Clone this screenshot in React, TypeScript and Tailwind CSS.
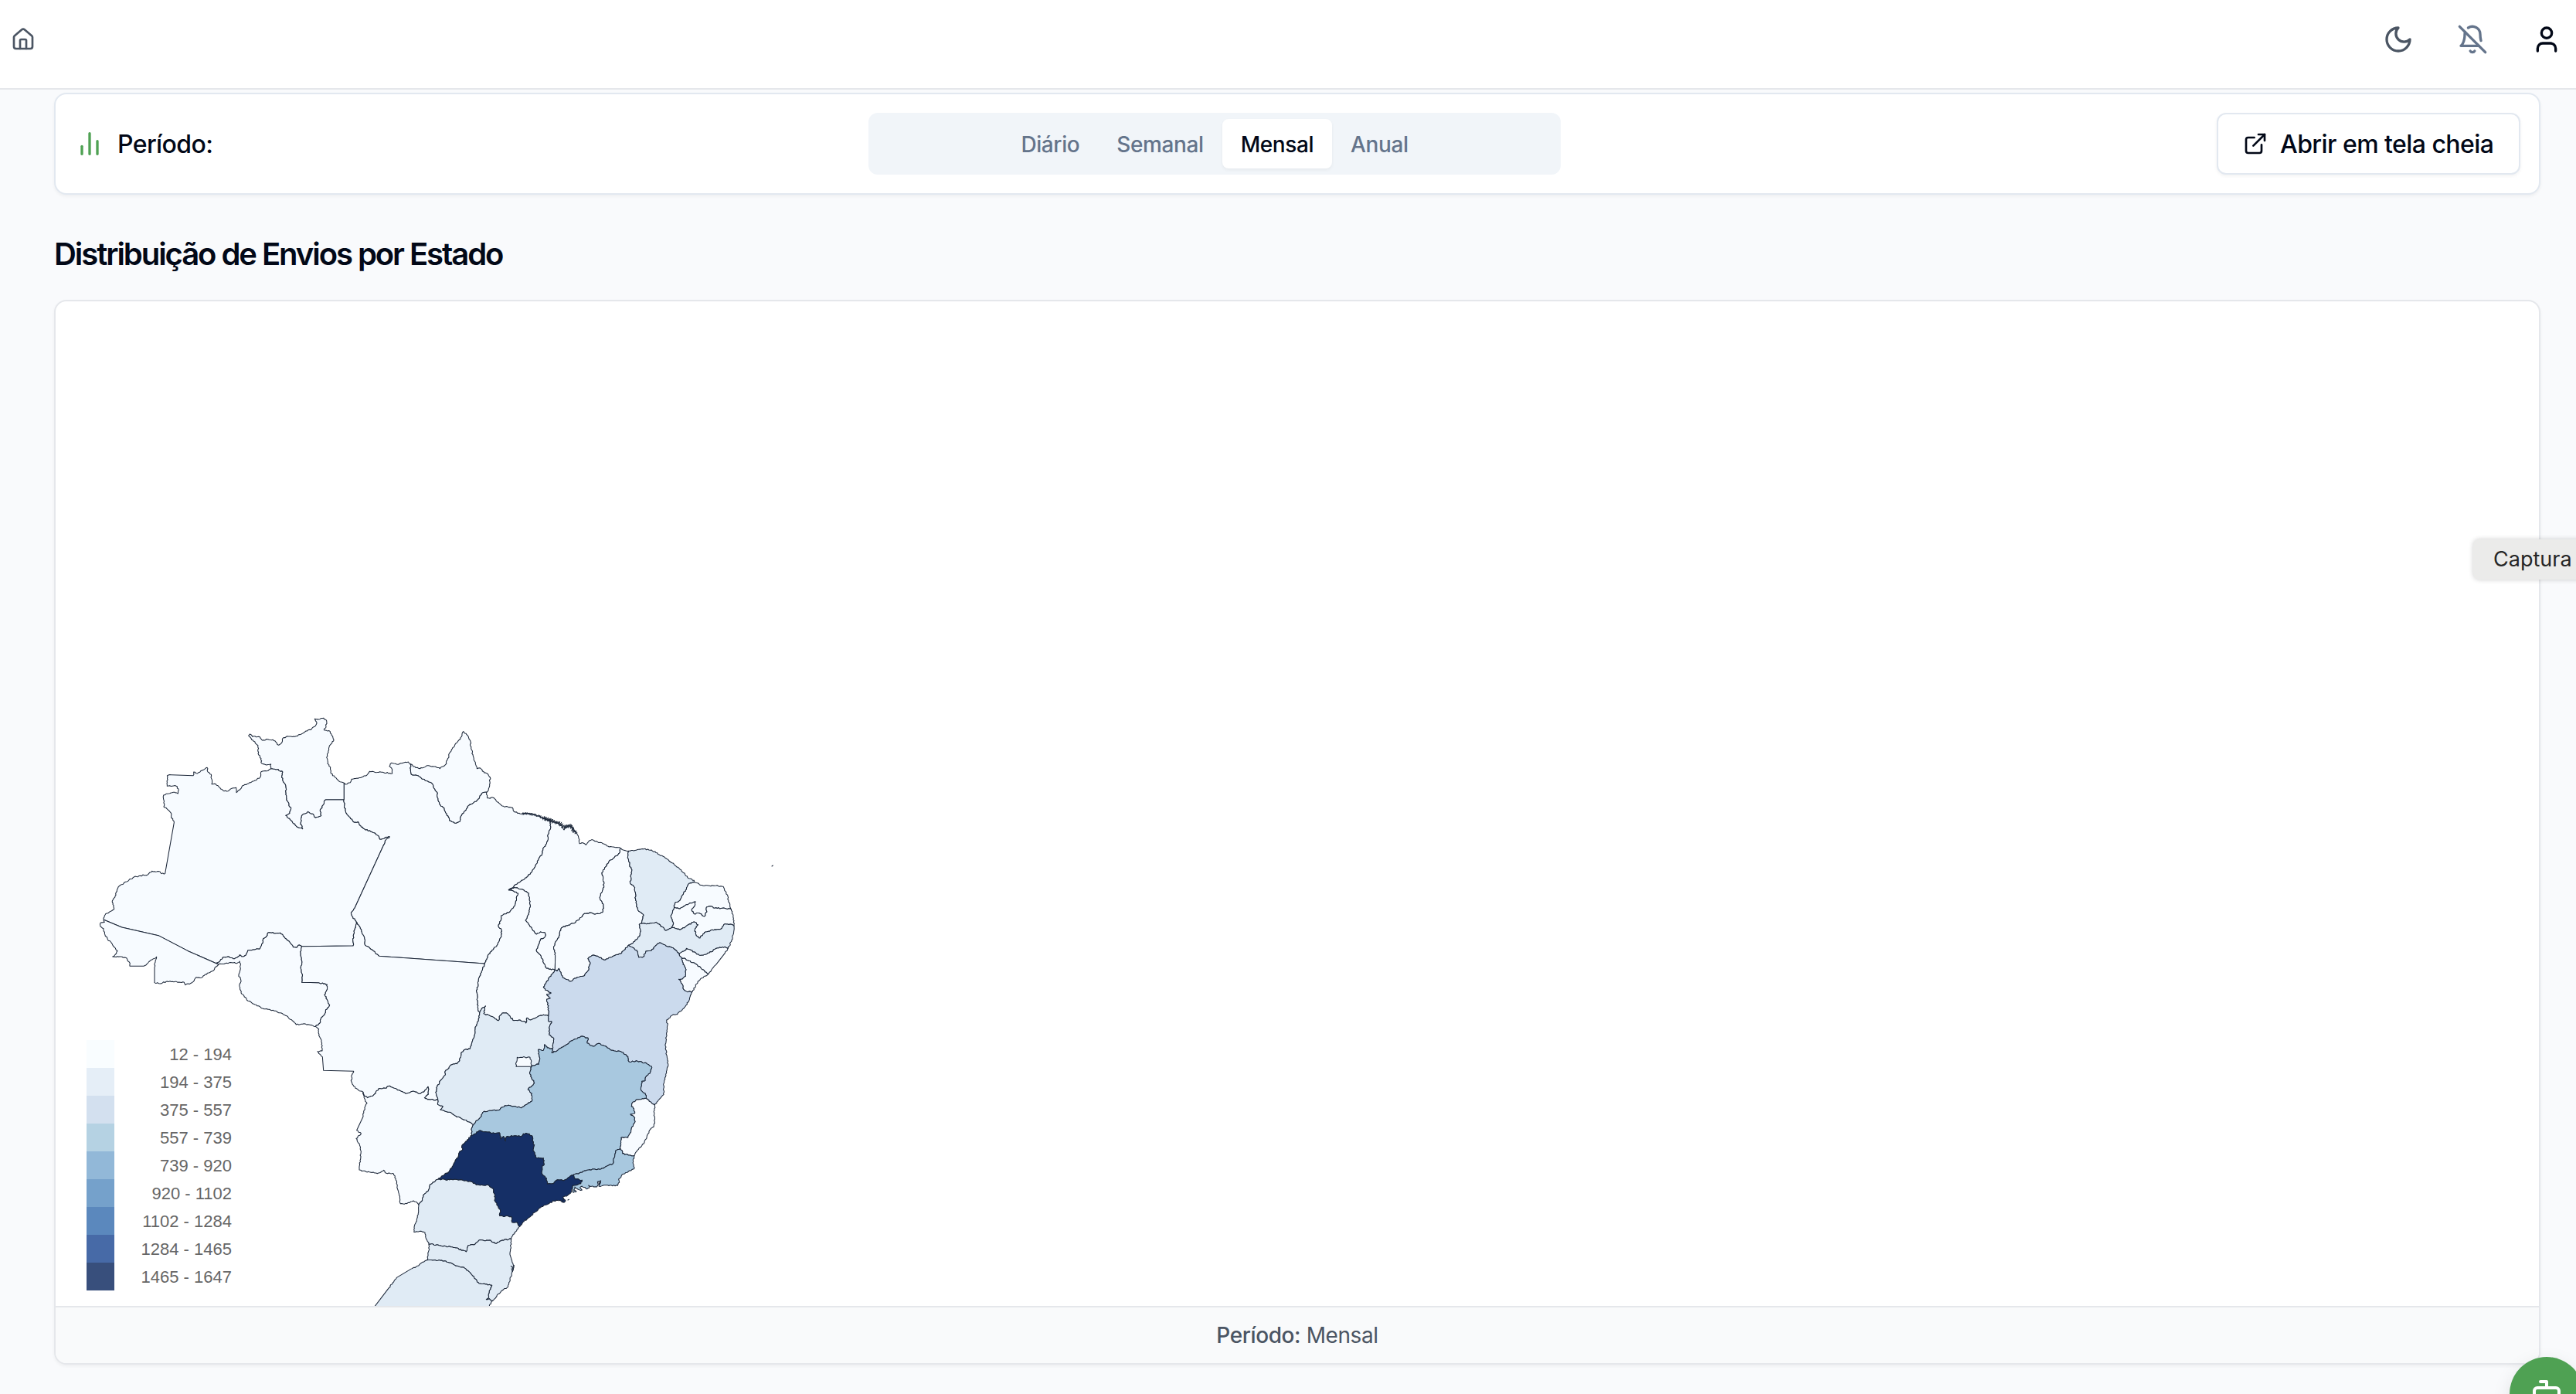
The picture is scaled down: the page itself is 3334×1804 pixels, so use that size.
import React from "react";

type Pt = [number, number];

/* Sheet origins: every border is digitised on one of five map sheets. */
const SHEETS: Record<string, Pt> = {
  A: [330, 2700],
  B: [1290, 2700],
  C: [1950, 3120],
  D: [1140, 3600],
  E: [1620, 3840],
};

const RAW: Record<string, string> = {
  amW: "A 73,871 76,855 85,846 100,838 113,830 111,815 106,803 110,790 120,775 124,755 130,742 150,730 170,718 190,705 215,700 245,695 260,682 288,683 298,692 311,691 346,493 335,470 333,455 318,440 306,432 306,386 325,381 343,376 361,381 362,362 354,352 319,352 319,312 335,308 420,311 422,297 437,303 449,293 460,289 474,280 478,298 490,307 492,344 508,344 524,358 540,371 556,371 572,360 587,358 588,377 600,367 612,350 635,342 660,330 680,318 684,296 705,293 722,284",
  rrAm: "A 722,284 745,287 768,297 764,318 776,342 782,365 780,385 786,410 800,440 795,458 780,466 800,485 820,507 845,518 837,495 841,467 865,451 885,460 895,474 917,466 913,450 920,430 935,404 1006,404",
  rrN: "A 722,284 722,267 705,270 685,263 684,245 672,226 672,195 655,178 635,156 640,150 650,160 675,160 688,174 710,170 730,172 745,185 752,193 765,182 768,166 785,158 815,160 840,150 858,138 880,130 895,118 900,108 892,91 912,92 927,88 938,98 936,120 928,134 952,140 958,155 966,172 948,200 945,222 938,240 942,265 953,278 955,303 975,320 990,335 1006,340",
  rrPa: "A 1006,340 1006,404",
  amPa: "A 1006,404 1007,430 1012,450 1025,470 1045,492 1060,490 1066,503 1085,518 1115,530 1140,545 1145,558 1165,552 1183,548 1165,565 1160,580 1047,826 1033,845 1040,860 1054,880",
  amMt: "A 1054,880 1048,905 1042,935 1041,972 842,974",
  amRo: "A 842,974 832,969 820,979 808,977 800,965 785,950 770,935 758,922 710,922 705,935 692,945 690,962 677,985 655,987 632,990 625,1008 612,1014 600,1008 590,1018 575,1022 560,1015 537,1016 525,1030 512,1038 518,1044",
  amAc: "A 73,871 143,900 285,932 400,992 518,1044",
  acS: "A 73,871 76,880 60,883 60,897 72,905 76,925 88,947 104,962 115,978 126,992 118,1005 107,1014 135,1014 162,1020 172,1035 174,1051 228,1051 245,1038 262,1025 278,1015 273,1035 270,1055 270,1115 292,1119 315,1111 350,1111 385,1114 390,1124 415,1115 432,1094 452,1096 475,1078 495,1070 518,1044",
  roS: "A 518,1044 545,1040 570,1037 590,1040 600,1032 604,1042 603,1065 597,1085 606,1110 600,1130 606,1155 617,1165 628,1182 655,1198 690,1215 740,1225 775,1240 810,1265 820,1278 845,1276 870,1278 895,1285",
  roMt: "D 32,75 26,95 32,130 28,160 34,190 32,214 98,215 130,222 131,240 120,262 130,280 140,302 125,320 120,340 108,350 102,372 85,385",
  paN: "B 46,340 52,345 70,338 75,325 100,322 130,312 145,295 165,298 195,298 233,303 233,288 222,275 230,262 250,267 275,262 295,258 303,266",
  paAp: "B 303,266 307,306 325,308 345,320 370,332 388,342 395,360 408,377 408,395 420,425 435,437 440,455 450,468 455,485 475,495 495,490 500,468 515,448 530,427 550,415 570,400 580,380 600,375",
  apN: "B 303,266 315,276 335,283 355,280 368,272 385,276 400,276 418,284 440,268 447,250 458,220 475,195 490,175 502,160 509,140 522,152 530,165 537,180 539,205 547,235 556,265 562,284 575,282 590,300 605,306 613,318 611,345 607,362 600,375",
  paNe: "B 600,375 602,398 628,398 640,413 665,430 700,436 705,450 730,460 742,457 775,460 800,468 825,480 848,490",
  maN: "B 848,490 870,492 890,505 900,522 915,505 925,500 935,515 945,530 955,545 960,575 975,573 985,580 995,568 1007,560 1030,568 1050,575 1075,588 1100,590 1119,593",
  paMa: "B 848,490 848,515 838,540 838,560 828,585 818,595 815,615 800,640 788,665 770,690 755,707 735,718 705,742 685,755",
  paTo: "B 685,755 705,760 722,768 715,785 712,805 705,820 690,840 675,848 656,855 656,870 645,895 657,910 657,935 640,970 620,990 605,1008 600,1025 592,1041",
  paMt: "B 94,880 108,900 115,920 125,940 128,970 145,980 160,992 182,1012 592,1041",
  mtTo: "D 742,141 730,170 720,195 716,220 710,250 714,285 716,315 722,335",
  toGo: "E 242,95 248,80 265,66 258,95 285,105 316,122 322,102 335,92 350,95 362,110 375,122 395,120 415,125 422,132 426,112 440,120 460,112 480,102 510,102",
  maTo: "B 685,755 708,745 735,752 763,768 765,790 769,815 762,850 750,873 762,888 775,905 793,927 808,918 825,920 827,935 808,948 800,970 792,990 805,1005 815,1022 820,1038 833,1060 865,1066",
  toBa: "C 205,646 185,672 160,712 168,724 190,735 173,740 187,755 173,760 180,795 180,822",
  maPi: "B 1119,593 1115,612 1095,630 1075,643 1062,665 1047,688 1052,710 1055,745 1042,770 1040,790 1053,815 1050,842 1020,850 1000,843 975,850 960,868 935,885 890,902 880,935 860,975 866,1010 865,1066",
  piBa: "C 205,646 213,650 220,640 228,655 235,675 265,690 290,675 315,670 332,650 342,622 333,602 355,588 375,595 400,607 420,597 440,588 460,583 490,550",
  piN: "C 459,173 470,180 492,184",
  piCe: "C 492,184 487,210 495,235 503,262 497,308 515,325 518,370 522,395 530,418 548,430 545,448 540,466",
  piPe: "C 540,466 532,470 538,495 535,510 515,535 490,550",
  ceN: "C 492,184 520,181 550,176 580,180 610,198 640,215 665,232 690,255 710,275 725,290 745,298 745,305",
  ceRn: "C 745,305 725,310 712,335 700,355 690,375 670,385 668,402",
  cePb: "C 668,402 660,425 655,440 665,465 657,480",
  cePe: "C 540,466 565,466 597,460 620,478 635,493 650,485 657,480",
  rnPb: "C 668,402 690,408 715,392 750,381 748,395 735,412 745,428 765,425 785,438 795,420 793,402 808,398 825,406 855,406 889,410",
  rnE: "C 745,305 780,319 830,318 858,322 870,345 882,385 889,410",
  pbE: "C 889,410 897,435 900,475",
  pbPe: "C 657,480 690,490 715,475 745,459 760,470 748,490 753,512 768,522 785,500 815,490 850,486 865,467 885,468 900,475",
  peE: "C 900,475 898,505 890,535 878,560",
  peAl: "C 878,560 855,556 830,562 812,575 790,585 765,588 745,575 715,562 705,572 687,585",
  peBa: "C 490,550 510,560 525,575 530,597 548,595 558,573 580,570 595,552 612,540 635,552 655,557 675,570 687,585",
  alE: "C 878,560 865,580 830,625 800,662",
  alSe: "C 697,598 720,608 750,622 780,645 800,662",
  alBa: "C 687,585 697,598",
  seBa: "C 697,598 700,615 712,640 712,670 700,680 685,682 698,700 705,722 720,731 738,730",
  seE: "C 800,662 770,680 755,700 738,730",
  baE: "E 1068,10 1055,45 1035,75 1010,98 992,100 968,120 972,140 968,170 963,215 968,255 974,290 965,330 957,375 957,410 940,428 922,450",
  baGo: "E 510,102 510,125 522,125 512,150 513,178 530,190 528,210 525,232",
  baMg: "E 525,232 522,247 545,238 580,215 610,195 635,184 663,190 660,210 682,222 705,211 725,220 755,238 790,242 818,262 822,282 855,280 890,288 911,303 905,322 888,340 885,355 872,358 868,390 885,405 890,425",
  baEs: "E 890,425 922,450",
  goMg: "E 525,232 505,228 495,215 490,238 470,235 475,265 472,292 445,298 440,315 438,330 455,365 430,390 445,405 445,435 420,450 405,461 380,455 340,452 315,470 285,472 255,478 245,498 228,512 218,527",
  goMs: "E 80,430 80,448 100,455 90,468 125,478 150,493 185,508 205,517 218,527",
  mtGo: "E 242,95 238,120 225,150 222,180 213,205 205,232 185,235 172,245 165,278 155,290 135,293 108,320 108,335 90,355 78,378 72,400 80,430",
  mtMs: "D 270,640 275,655 287,662 310,652 330,627 355,625 373,616 400,628 435,646 468,637 485,646 505,640 522,619 523,648 508,662 530,670 560,670",
  mtW: "D 85,385 98,395 98,420 110,450 111,480 93,482 112,503 116,556 233,559 225,575 225,600 240,625 255,635 270,640",
  msW: "D 270,640 275,665 285,683 272,715 270,735 245,788 262,800 243,820 258,850 262,870 258,905 255,942 280,948 325,956 350,943 360,955 388,957 400,985 405,1020 412,1050 415,1073 440,1073 465,1062 480,1070 486,1078",
  msPr: "E 6,838 20,820 25,798 42,785 50,758 82,738",
  msSp: "E 82,738 105,722 125,708 140,685 148,665 158,655 163,635 175,625 175,605 195,585 212,568",
  msMg: "E 218,527 210,545 212,568",
  mgSp: "E 212,568 245,549 285,558 320,558 325,582 335,572 343,590 347,573 385,570 405,572 412,562 435,562 448,575 450,598 455,605 450,622 462,655 490,656 493,680 485,690 485,718 502,735 505,757 530,755 545,740 570,743 590,730 605,722",
  mgRj: "E 605,722 630,714 665,702 708,700 735,688 760,678 765,655 770,628 788,618",
  mgEs: "E 890,425 870,428 850,430 835,442 832,455 842,465 845,482 828,486 845,500 845,518 832,540 830,555 818,577 792,577 790,600 788,618",
  esE: "E 922,450 920,480 922,515 918,535 905,545 892,570 882,595 865,615 855,625 843,647",
  rjEs: "E 788,618 797,630 797,638 820,645 843,647",
  rjS: "E 843,647 838,665 842,698 820,708 800,718 782,738 785,750 778,763 730,761 705,765 712,745 700,748 703,758 697,768 685,768 665,762 668,772 655,775 640,765 632,770 640,780 625,778 612,768 608,780 618,786 606,790 603,763",
  spRj: "E 605,722 615,738 640,742 635,755 603,763",
  spE: "E 603,763 600,785 585,800 565,808 575,820 568,828 556,820 530,822 500,838 475,850 455,868 430,890 410,905 398,922",
  prSp: "E 82,738 110,740 145,738 180,743 210,748 230,760 275,760 295,775 300,795 303,825 315,845 323,860 320,880 365,883 368,905 390,907 398,922",
  prE: "E 398,922 378,945 365,970",
  prSc: "E 45,990 75,993 110,998 150,1005 190,1020 198,995 225,990 240,975 280,975 303,988 330,975 365,970",
  prW: "E 6,838 5,860 1,885 -5,905 -12,925 -13,943 0,942 15,940 30,945 35,970 45,990",
  scW: "E 45,990 45,1015 42,1035 38,1052",
  scRs: "E 38,1052 60,1053 95,1053 130,1063 155,1075 180,1080 205,1100 225,1125 240,1143 265,1146 290,1150 280,1170 278,1195 268,1205 280,1202 293,1210",
  scE: "E 365,970 363,1000 360,1030 368,1055 375,1075 368,1100 360,1125 353,1155 330,1170 310,1188 293,1210",
  rsE: "E 293,1210 280,1230 250,1290",
  rsW: "E 38,1052 20,1060 0,1075 -30,1090 -80,1120 -110,1160 -165,1232 -200,1290",
  df: "E 388,265 438,265 442,275 442,301 384,301 384,285 388,265",
};

/* Breaks medium-length segments into small irregular steps, the way surveyed borders run. */
let seed = 11;
function rand() {
  seed = (seed * 16807) % 2147483647;
  return seed / 2147483647 - 0.5;
}
function roughen(pts: Pt[]): Pt[] {
  const out: Pt[] = [pts[0]];
  for (let i = 1; i < pts.length; i++) {
    const [x0, y0] = pts[i - 1];
    const [x1, y1] = pts[i];
    const len = Math.hypot(x1 - x0, y1 - y0);
    if (len > 8 && len < 52) {
      const n = Math.max(2, Math.round(len / 5));
      for (let k = 1; k < n; k++) {
        const d = rand() * 4.6;
        out.push([
          x0 + ((x1 - x0) * k) / n - ((y1 - y0) / len) * d,
          y0 + ((y1 - y0) * k) / n + ((x1 - x0) / len) * d,
        ]);
      }
    }
    out.push([x1, y1]);
  }
  return out;
}

const ARCS: Record<string, Pt[]> = {};
for (const key of Object.keys(RAW)) {
  const [sheet, ...rest] = RAW[key].split(" ");
  const [ox, oy] = SHEETS[sheet];
  ARCS[key] = roughen(
    rest.map((p) => {
      const [x, y] = p.split(",").map(Number);
      return [x + ox, y + oy] as Pt;
    })
  );
}

function outline(spec: string) {
  const pts: Pt[] = [];
  for (const name of spec.split(" ")) {
    if (name[0] === "-") pts.push(...[...ARCS[name.slice(1)]].reverse());
    else pts.push(...ARCS[name]);
  }
  return "M" + pts.map(([x, y]) => `${x.toFixed(1)} ${y.toFixed(1)}`).join("L") + "Z";
}

const C0 = "#f7fbff";
const C1 = "#e0ebf5";
const C2 = "#cbdaed";
const C3 = "#a8c8df";
const C8 = "#152f66";

const STATES: { id: string; fill: string; arcs: string }[] = [
  { id: "AM", fill: C0, arcs: "amW rrAm amPa amMt amRo -amAc" },
  { id: "RR", fill: C0, arcs: "rrN rrPa -rrAm" },
  { id: "AC", fill: C0, arcs: "amAc -acS" },
  { id: "RO", fill: C0, arcs: "amRo roS -roMt" },
  { id: "PA", fill: C0, arcs: "paN paAp paNe paMa paTo -paMt -amPa -rrPa" },
  { id: "AP", fill: C0, arcs: "apN -paAp" },
  { id: "MA", fill: C0, arcs: "maN maPi -maTo -paMa" },
  { id: "TO", fill: C0, arcs: "maTo toBa -toGo -mtTo -paTo" },
  { id: "MT", fill: C0, arcs: "-amMt paMt mtTo mtGo -mtMs -mtW -roMt" },
  { id: "MS", fill: C0, arcs: "mtMs goMs msMg -msSp -msPr -msW" },
  { id: "PI", fill: C0, arcs: "piN piCe piPe -piBa -maPi" },
  { id: "RN", fill: C0, arcs: "rnE -rnPb -ceRn" },
  { id: "PB", fill: C0, arcs: "rnPb pbE -pbPe -cePb" },
  { id: "AL", fill: C0, arcs: "alE -alSe -alBa -peAl" },
  { id: "SE", fill: C0, arcs: "alSe seE -seBa" },
  { id: "CE", fill: C1, arcs: "ceN ceRn cePb -cePe -piCe" },
  { id: "PE", fill: C1, arcs: "cePe pbPe peE peAl -peBa -piPe" },
  { id: "GO", fill: C1, arcs: "toGo baGo goMg -goMs -mtGo" },
  { id: "BA", fill: C2, arcs: "piBa peBa alBa seBa baE -baEs -baMg -baGo -toBa" },
  { id: "MG", fill: C3, arcs: "baMg mgEs -mgRj -mgSp -msMg -goMg" },
  { id: "ES", fill: C0, arcs: "baEs esE -rjEs -mgEs" },
  { id: "RJ", fill: C3, arcs: "mgRj rjEs rjS -spRj" },
  { id: "PR", fill: C1, arcs: "msPr prSp prE -prSc -prW" },
  { id: "SC", fill: C1, arcs: "prSc scE -scRs -scW" },
  { id: "RS", fill: C1, arcs: "scRs rsE -rsW" },
  { id: "SP", fill: C8, arcs: "msSp mgSp spRj spE -prSp" },
  { id: "DF", fill: C0, arcs: "df" },
];

/* Dense inlets along the Pará and Maranhão coast. */
function inlets(spine: Pt[], step: number, amp: number) {
  const pts: string[] = [];
  let side = 1;
  for (let i = 1; i < spine.length; i++) {
    const [x0, y0] = spine[i - 1];
    const [x1, y1] = spine[i];
    const len = Math.hypot(x1 - x0, y1 - y0);
    for (let t = 0; t < len; t += step) {
      const d = side * amp * (0.75 + rand());
      side = -side;
      pts.push(
        `${(x0 + ((x1 - x0) * t) / len - ((y1 - y0) / len) * d).toFixed(1)} ${(
          y0 + ((y1 - y0) * t) / len + ((x1 - x0) / len) * d
        ).toFixed(1)}`
      );
    }
  }
  return "M" + pts.join("L");
}
const INLETS_PA = inlets([[2028, 3158], [2065, 3161], [2090, 3168], [2115, 3178], [2138, 3186]], 2.2, 4.5);
const INLETS_MA = inlets([[2110, 3176], [2150, 3190], [2175, 3198], [2190, 3212], [2205, 3206], [2217, 3206], [2226, 3220], [2238, 3237]], 1.9, 7);

function BrazilMap() {
  return (
    <svg className="block h-full w-full" viewBox="216 1170 9642 3900" preserveAspectRatio="none">
      <g stroke="#1b2638" strokeWidth="3.1" strokeLinejoin="round" strokeLinecap="round">
        {STATES.map((s) => (
          <path key={s.id} d={outline(s.arcs)} fill={s.fill} />
        ))}
        <path d={INLETS_PA} fill="none" strokeWidth="2.4" />
        <path d={INLETS_MA} fill="none" strokeWidth="2.6" />
        <path d="M2184 4660l8-3 4 5-5 6-7-2zM2205 4659l4-2" fill={C8} />
        <path d="M2325 4588l8-4-2 10-5 6zM1984 4915l6 6 6-8M1986 4925l4 12 4-14" fill="none" />
        <path d="M2997 3363l4-3" fill="none" />
      </g>
    </svg>
  );
}

function Icon({ className, paths, children }: { className: string; paths?: string[]; children?: React.ReactNode }) {
  return (
    <svg className={className} viewBox="0 0 24 24" fill="none" stroke="currentColor" strokeWidth="2" strokeLinecap="round" strokeLinejoin="round">
      {paths?.map((d) => <path key={d} d={d} />)}
      {children}
    </svg>
  );
}

const LEGEND = [
  { swatch: "bg-[#f9fdff]", label: "12 - 194" },
  { swatch: "bg-[#e5eef7]", label: "194 - 375" },
  { swatch: "bg-[#d3e0ef]", label: "375 - 557" },
  { swatch: "bg-[#b5d2e3]", label: "557 - 739" },
  { swatch: "bg-[#92b8d8]", label: "739 - 920" },
  { swatch: "bg-[#75a1cb]", label: "920 - 1102" },
  { swatch: "bg-[#5b88bd]", label: "1102 - 1284" },
  { swatch: "bg-[#476aa7]", label: "1284 - 1465" },
  { swatch: "bg-[#384f7c]", label: "1465 - 1647" },
];

const TABS = ["Diário", "Semanal", "Mensal", "Anual"];

export default function App() {
  return (
    <div className="relative h-[1804px] w-[3334px] overflow-hidden bg-[#f9fafc] font-['Inter',sans-serif] text-[#020817]">
      <header className="flex h-[116px] items-start justify-between border-b-2 border-[#e5e7eb] bg-white pr-[18px] pl-[14px]">
        <Icon
          className="mt-[35px] size-8 text-[#4b5563]"
          paths={[
            "M15 21v-8a1 1 0 0 0-1-1h-4a1 1 0 0 0-1 1v8",
            "M3 10a2 2 0 0 1 .709-1.528l7-5.999a2 2 0 0 1 2.582 0l7 5.999A2 2 0 0 1 21 10v9a2 2 0 0 1-2 2H5a2 2 0 0 1-2-2z",
          ]}
        />
        <div className="mt-[31px] flex gap-14">
          <Icon className="size-10 text-[#4b5563]" paths={["M12 3a6 6 0 0 0 9 9 9 9 0 1 1-9-9Z"]} />
          <Icon
            className="size-10 text-[#64748b]"
            paths={[
              "M8.7 3A6 6 0 0 1 18 8a21.3 21.3 0 0 0 .6 5",
              "M17 17H3s3-2 3-9a4.67 4.67 0 0 1 .3-1.7",
              "M10.3 21a1.94 1.94 0 0 0 3.4 0",
              "m2 2 20 20",
            ]}
          />
          <Icon className="size-10 text-[#020817]" paths={["M19 21v-2a4 4 0 0 0-4-4H9a4 4 0 0 0-4 4v2"]}>
            <circle cx="12" cy="7" r="4" />
          </Icon>
        </div>
      </header>

      <main className="ml-[70px] w-[3218px] pt-1">
        <section className="flex h-[132px] items-center justify-between rounded-2xl border-2 border-[#e2e8f0] bg-white px-6 shadow-[0_2px_4px_rgba(0,0,0,0.05)]">
          <div className="flex w-[179px] items-center gap-4">
            <Icon className="size-10 shrink-0 text-[#4fa153]" paths={["M18 20V10", "M12 20V4", "M6 20v-6"]} />
            <span className="pt-[2px] text-[32px] leading-[48px] font-medium tracking-[-0.6px]">Período:</span>
          </div>
          <div className="flex h-20 w-[896px] items-center justify-center rounded-xl bg-[#f1f5f9] p-2">
            {TABS.map((t) => (
              <button
                key={t}
                className={
                  t === "Mensal"
                    ? "h-16 rounded-lg bg-white px-6 pt-[2px] text-[28px] font-medium tracking-[-0.4px] shadow-[0_2px_4px_rgba(0,0,0,0.05)]"
                    : "h-16 rounded-lg px-6 pt-[2px] text-[28px] font-medium tracking-[-0.4px] text-[#64748b]"
                }
              >
                {t}
              </button>
            ))}
          </div>
          <button className="flex h-20 w-[393px] items-center gap-4 rounded-xl border-2 border-[#e2e8f0] bg-white px-8 text-[32px] font-medium whitespace-nowrap tracking-[-0.55px] shadow-[0_2px_4px_rgba(0,0,0,0.05)]">
            <Icon
              className="size-8 shrink-0"
              paths={["M15 3h6v6", "M10 14 21 3", "M18 13v6a2 2 0 0 1-2 2H5a2 2 0 0 1-2-2V8a2 2 0 0 1 2-2h6"]}
            />
            <span className="pt-[2px]">Abrir em tela cheia</span>
          </button>
        </section>

        <h2 className="mt-12 h-14 pt-[1px] text-[40px] leading-[56px] font-semibold tracking-[-2.06px]">Distribuição de Envios por Estado</h2>

        <section className="mt-8 flex h-[1378px] flex-col overflow-hidden rounded-2xl border-2 border-[#e5e7eb] bg-white shadow-[0_2px_4px_rgba(0,0,0,0.05)]">
          <div className="relative h-[1300px]">
            <BrazilMap />
            <ul className="absolute top-[956px] left-10 font-['Liberation_Sans',Arial,sans-serif] text-[22px] text-[#666]">
              {LEGEND.map((l) => (
                <li key={l.label} className="flex h-9 items-center">
                  <span className={`size-9 ${l.swatch}`} />
                  <span className="w-[152px] text-right">{l.label}</span>
                </li>
              ))}
            </ul>
          </div>
          <footer className="flex flex-1 items-center justify-center border-t-2 border-[#e5e7eb] bg-[#f9fafb] text-[28px] tracking-[-0.4px] text-[#4b5563]">
            <p>
              <span className="font-medium">Período:</span> Mensal
            </p>
          </footer>
        </section>
      </main>

      <div className="absolute top-[698px] left-[3201px] h-[52px] w-[200px] rounded-lg bg-[#ebebea] pl-[26px] text-[27px] leading-[52px] whitespace-nowrap text-[#262626] shadow-[0_0_6px_rgba(0,0,0,0.2)]">
        Captura
      </div>

      <button className="absolute top-[1756px] left-[3248px] flex size-24 items-center justify-center rounded-full bg-[#4fa153] text-white shadow-[0_8px_24px_rgba(0,0,0,0.1)]">
        <Icon className="size-12" paths={["M12 8V4H8", "M2 14h2", "M20 14h2", "M15 13v2", "M9 13v2"]}>
          <rect width="16" height="12" x="4" y="8" rx="2" />
        </Icon>
      </button>
    </div>
  );
}
